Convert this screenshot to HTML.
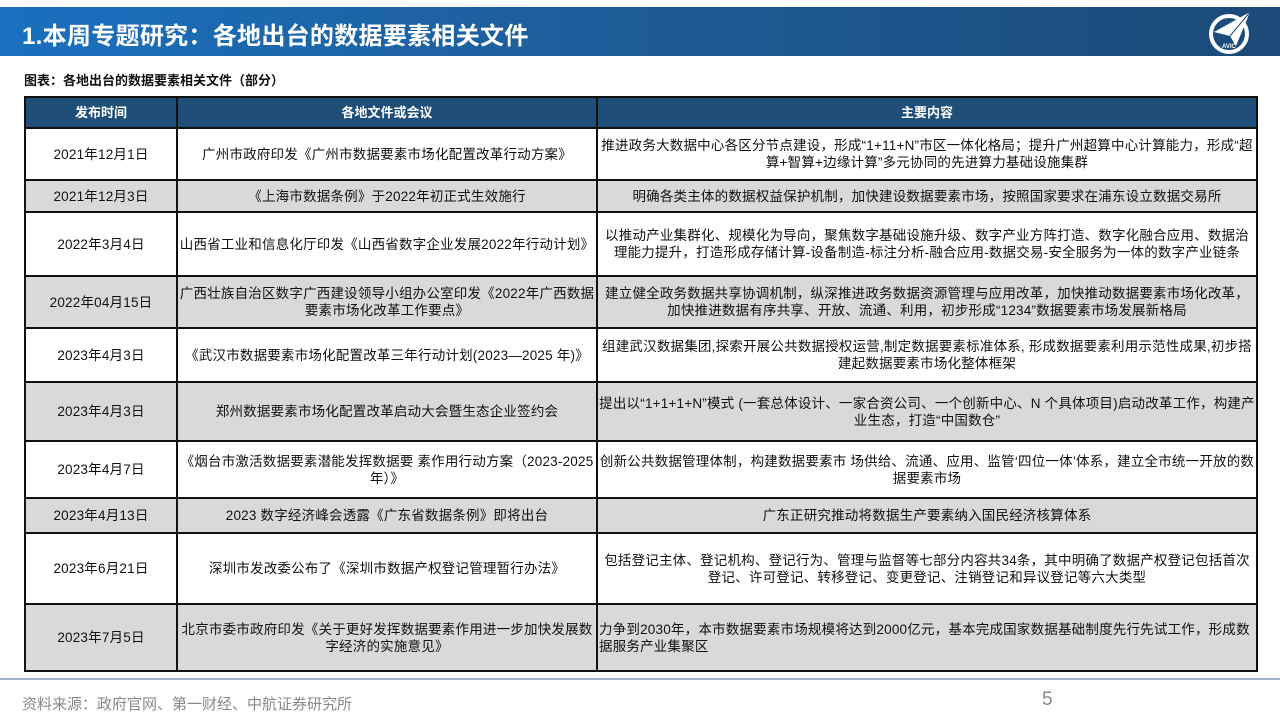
<!DOCTYPE html>
<html><head><meta charset="utf-8"><style>
*{margin:0;padding:0;box-sizing:border-box}
body{width:1280px;height:720px;background:#fff;position:relative;overflow:hidden;font-family:"Liberation Sans","Noto Sans CJK SC",sans-serif;color:#111}
.bar{position:absolute;left:0;top:7px;width:1280px;height:49px;background:linear-gradient(90deg,#1a70bf 0%,#1e5d9a 45%,#1c4a78 100%)}
.bar h1{position:absolute;left:22px;top:9px;font-size:24px;color:#fff;font-weight:bold;letter-spacing:0.3px}
.cap{position:absolute;left:24px;top:70px;font-size:13px;font-weight:bold}
table{position:absolute;left:24px;top:96px;width:1232px;border-collapse:collapse;font-size:13.5px;table-layout:fixed}
td,th{border:2px solid #111;text-align:center;vertical-align:middle;line-height:17px;padding:0 1px}
td{letter-spacing:0.2px}
th{background:#1f4e79;color:#fff;height:31px;font-weight:bold;font-size:13px}
tr.g td{background:#d9d9d9}
.foot{position:absolute;left:0;top:678px;width:1280px;height:2px;background:#9fb3c8}
.src{position:absolute;left:22px;top:693px;font-size:15px;color:#888}
.pg{position:absolute;left:1042px;top:689px;font-size:19px;color:#888}
</style></head><body>
<div class="bar"><h1>1.本周专题研究：各地出台的数据要素相关文件</h1>
<svg style="position:absolute;left:1206px;top:3px" width="46" height="44" viewBox="0 0 46 44"><circle cx="23" cy="24" r="18" fill="none" stroke="#fff" stroke-width="4"/><path d="M8 22 L44 2 L30 36 L24 26 Z" fill="#fff"/><path d="M24 26 L44 2" stroke="#1c4a78" stroke-width="1"/><text x="16" y="38" font-size="6" fill="#fff" font-weight="bold" font-family="Liberation Sans">AVIC</text></svg></div>
<div class="cap">图表：各地出台的数据要素相关文件（部分）</div>
<table>
<colgroup><col style="width:152px"><col style="width:420px"><col style="width:660px"></colgroup>
<tr><th>发布时间</th><th>各地文件或会议</th><th>主要内容</th></tr>
<tr style="height:52px"><td>2021年12月1日</td><td>广州市政府印发《广州市数据要素市场化配置改革行动方案》</td><td>推进政务大数据中心各区分节点建设，形成“1+11+N”市区一体化格局；提升广州超算中心计算能力，形成“超算+智算+边缘计算”多元协同的先进算力基础设施集群</td></tr>
<tr class="g" style="height:32px"><td>2021年12月3日</td><td>《上海市数据条例》于2022年初正式生效施行</td><td>明确各类主体的数据权益保护机制，加快建设数据要素市场，按照国家要求在浦东设立数据交易所</td></tr>
<tr style="height:64px"><td>2022年3月4日</td><td style="white-space:nowrap;overflow:hidden">山西省工业和信息化厅印发《山西省数字企业发展2022年行动计划》</td><td>以推动产业集群化、规模化为导向，聚焦数字基础设施升级、数字产业方阵打造、数字化融合应用、数据治理能力提升，打造形成存储计算-设备制造-标注分析-融合应用-数据交易-安全服务为一体的数字产业链条</td></tr>
<tr class="g" style="height:52px"><td>2022年04月15日</td><td>广西壮族自治区数字广西建设领导小组办公室印发《2022年广西数据要素市场化改革工作要点》</td><td>建立健全政务数据共享协调机制，纵深推进政务数据资源管理与应用改革，加快推动数据要素市场化改革，加快推进数据有序共享、开放、流通、利用，初步形成“1234”数据要素市场发展新格局</td></tr>
<tr style="height:54px"><td>2023年4月3日</td><td style="white-space:nowrap;overflow:hidden">《武汉市数据要素市场化配置改革三年行动计划(2023—2025 年)》</td><td>组建武汉数据集团,探索开展公共数据授权运营,制定数据要素标准体系, 形成数据要素利用示范性成果,初步搭建起数据要素市场化整体框架</td></tr>
<tr class="g" style="height:59px"><td>2023年4月3日</td><td>郑州数据要素市场化配置改革启动大会暨生态企业签约会</td><td>提出以“1+1+1+N”模式 (一套总体设计、一家合资公司、一个创新中心、N 个具体项目)启动改革工作，构建产业生态，打造“中国数仓”</td></tr>
<tr style="height:57px"><td>2023年4月7日</td><td>《烟台市激活数据要素潜能发挥数据要 素作用行动方案（2023-2025 年）》</td><td>创新公共数据管理体制，构建数据要素市 场供给、流通、应用、监管‘四位一体’体系，建立全市统一开放的数据要素市场</td></tr>
<tr class="g" style="height:35px"><td>2023年4月13日</td><td>2023 数字经济峰会透露《广东省数据条例》即将出台</td><td>广东正研究推动将数据生产要素纳入国民经济核算体系</td></tr>
<tr style="height:71px"><td>2023年6月21日</td><td>深圳市发改委公布了《深圳市数据产权登记管理暂行办法》</td><td>包括登记主体、登记机构、登记行为、管理与监督等七部分内容共34条，其中明确了数据产权登记包括首次登记、许可登记、转移登记、变更登记、注销登记和异议登记等六大类型</td></tr>
<tr class="g" style="height:67px"><td>2023年7月5日</td><td>北京市委市政府印发《关于更好发挥数据要素作用进一步加快发展数字经济的实施意见》</td><td style="text-align:left">力争到2030年，本市数据要素市场规模将达到2000亿元，基本完成国家数据基础制度先行先试工作，形成数据服务产业集聚区</td></tr>
</table>
<div class="foot"></div>
<div class="src">资料来源：政府官网、第一财经、中航证券研究所</div>
<div class="pg">5</div>
</body></html>
